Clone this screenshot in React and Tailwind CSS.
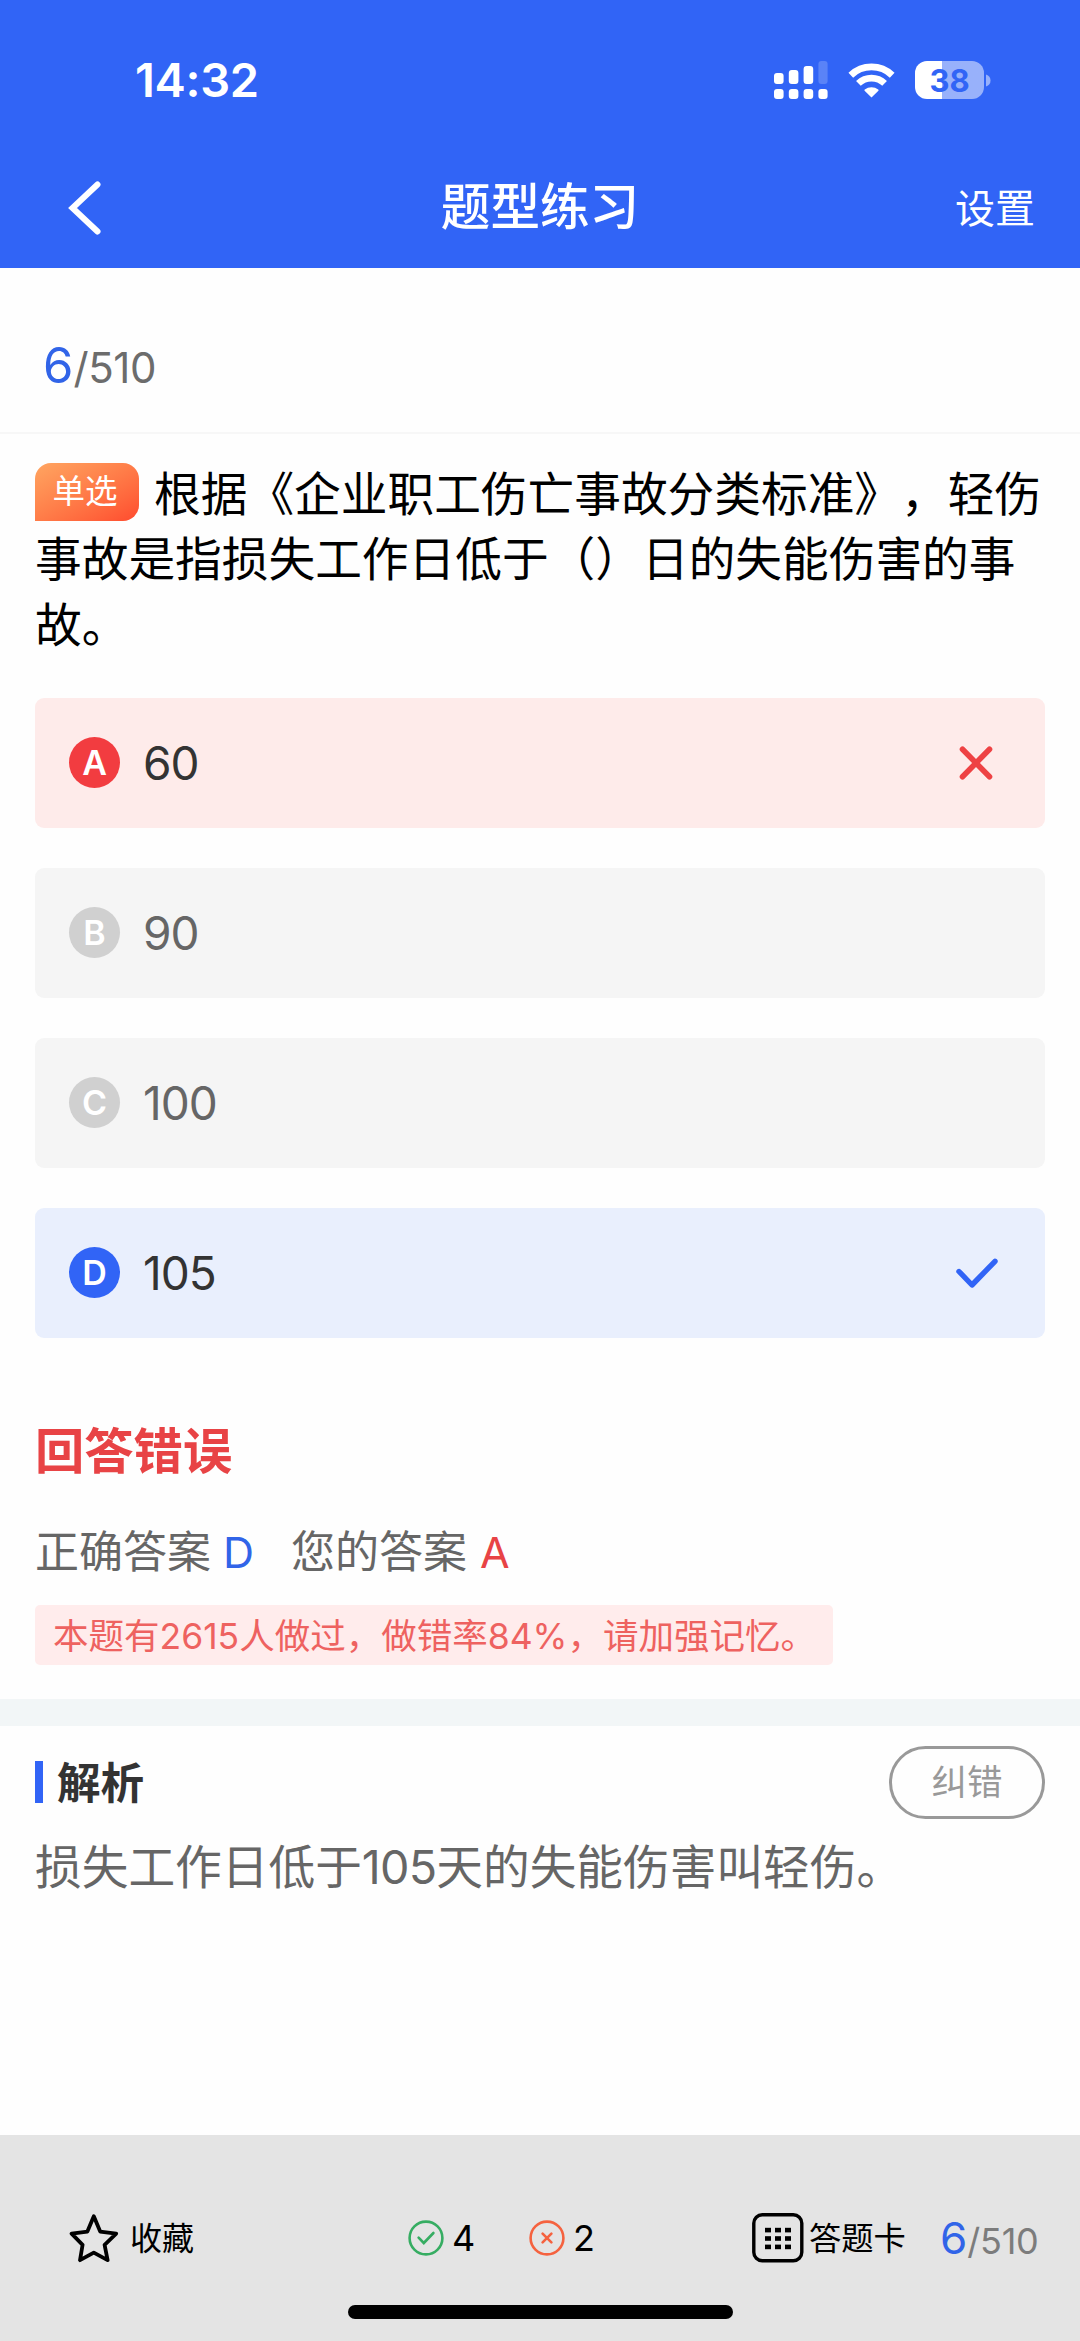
import React, { useState } from 'react';

const options = [
  { key: 'A', text: '60' },
  { key: 'B', text: '90' },
  { key: 'C', text: '100' },
  { key: 'D', text: '105' },
];

const StatusBar = () => (
  <div className="flex h-[134px] items-start justify-between pl-[135px] pr-[89px] pt-[56px] text-white">
    <span className="text-[47px] leading-[48px] font-semibold tracking-[-0.3px]">14:32</span>
    <div className="flex items-center pt-[5px]">
      {/* dual sim signal */}
      <svg className="h-[38px] w-[54px]" viewBox="0 0 54 38" fill="currentColor">
        <rect x="0" y="12" width="9.6" height="11" rx="3" />
        <rect x="14.8" y="9" width="9.6" height="14" rx="3" />
        <rect x="29.6" y="5" width="9.6" height="18" rx="3" />
        <rect x="44.4" y="0" width="9.2" height="23" rx="3" opacity="0.2" />
        <rect x="0" y="28" width="9.6" height="10" rx="3" />
        <rect x="14.8" y="28" width="9.6" height="10" rx="3" />
        <rect x="29.6" y="28" width="9.6" height="10" rx="3" />
        <rect x="44.4" y="28" width="9.2" height="10" rx="3" />
      </svg>
      <svg className="ml-[20px] h-[35px] w-[47px]" viewBox="0 0 47 35">
        <g fill="none" stroke="currentColor" strokeWidth="6.8">
          <path d="M2.8 12.2a30 30 0 0 1 41.4 0" />
          <path d="M10.4 20.4a19 19 0 0 1 26.2 0" />
        </g>
        <path d="M23.5 34.5l-6.9-6.7q-.6-.7.2-1.2a10.4 10.4 0 0 1 13.4 0q.8.5.2 1.2z" fill="currentColor" />
      </svg>
      <div className="ml-[20px] flex h-[38px] w-[69px] items-center justify-center rounded-[12px] bg-linear-to-r from-white from-39% to-[#98b1fb] to-39% text-[31px] leading-none font-bold text-[#3164f6]">
        38
      </div>
      <svg className="ml-[2px] h-[13px] w-[5px]" viewBox="0 0 5 13">
        <path d="M0 0.5Q4.5 2 4.5 6.5T0 12.5z" fill="#98b1fb" />
      </svg>
    </div>
  </div>
);

const Progress = ({ small }) => (
  <div className={small ? 'flex items-baseline text-[36px] leading-none text-[#7c7c7c]' : 'flex items-baseline text-[42px] leading-none text-[#6c6c6c]'}>
    <span className={small ? 'text-[44px] text-[#3164e8]' : 'text-[49px] text-[#3164e8]'}>6</span>
    <span className={small ? 'tracking-[-0.2px]' : 'tracking-[-0.4px]'}>/510</span>
  </div>
);

const Option = ({ option, answer, selected, onSelect }) => {
  const isRight = option.key === answer;
  const isWrong = option.key === selected && !isRight;

  let card = 'bg-[#f5f5f5] text-[#666]';
  let dot = 'bg-[#d0d0d0]';
  if (isWrong) {
    card = 'bg-[#feebea] text-[#333]';
    dot = 'bg-[#f23c40]';
  }
  if (isRight) {
    card = 'bg-[#e9effd] text-[#333]';
    dot = 'bg-[#3164f6]';
  }

  return (
    <div
      onClick={() => onSelect(option.key)}
      className={`flex h-[130px] cursor-pointer items-center rounded-[9px] pl-[34px] pr-[46px] ${card}`}
    >
      <span className={`flex size-[51px] items-center justify-center rounded-full text-[34px] leading-none font-semibold text-white ${dot}`}>
        {option.key}
      </span>
      <span className="ml-[23px] flex-1 text-[46px] leading-none tracking-[-1px]">{option.text}</span>
      {isWrong && (
        <svg className="mr-[6px] size-[34px]" viewBox="0 0 34 34" fill="none" stroke="#ee4244" strokeWidth="5.6" strokeLinecap="round">
          <path d="M3.5 3.2L30.5 30.8M30.5 3.2L3.5 30.8" />
        </svg>
      )}
      {isRight && (
        <svg className="h-[32px] w-[44px]" viewBox="0 0 44 32" fill="none" stroke="#3164f6" strokeWidth="5.4" strokeLinecap="round" strokeLinejoin="round">
          <path d="M4 14.5L17 28L40 4.3" />
        </svg>
      )}
    </div>
  );
};

const App = () => {
  const [selected, setSelected] = useState('A');
  const answer = 'D';

  return (
    <div
      lang="zh-CN"
      className="flex h-[2341px] w-[1080px] flex-col overflow-hidden bg-[#fefefe] font-['Inter','Noto_Sans_CJK_SC',sans-serif] text-black [text-spacing-trim:space-all]"
    >
      {/* Header */}
      <header className="h-[268px] bg-[#3164f6]">
        <StatusBar />
        <div className="grid h-[134px] grid-cols-3 items-center px-[45px] pt-[13px] text-white">
          <svg className="ml-[23px] h-[54px] w-[34px]" viewBox="0 0 34 54" fill="none" stroke="currentColor" strokeWidth="6" strokeLinecap="round">
            <path d="M29.5 3.5L4.5 27L29.5 50.5" />
          </svg>
          <h1 className="text-center text-[49.6px] leading-none font-medium">题型练习</h1>
          <button className="pt-[2px] text-right text-[40px] leading-none">设置</button>
        </div>
      </header>

      {/* Counter */}
      <div className="flex h-[166px] items-center border-b-2 border-[#f7f7f7] pl-[43px] pt-[30px]">
        <Progress />
      </div>

      {/* Question */}
      <main className="px-[35px] pt-[28px]">
        <p className="text-[46.7px] leading-[65.3px]">
          <span className="float-left mt-[1px] mr-[15px] flex h-[58px] w-[104px] items-center justify-center rounded-[16px] rounded-bl-none bg-linear-to-br from-[#ffa561] to-[#ff4a2e] pr-[4px] pt-[1px] text-[32.5px] leading-none text-white">
            单选
          </span>
          根据《企业职工伤亡事故分类标准》，轻伤事故是指损失工作日低于（）日的失能伤害的事故。
        </p>

        <div className="mt-[40px] flex flex-col gap-[40px]">
          {options.map((option) => (
            <Option key={option.key} option={option} answer={answer} selected={selected} onSelect={setSelected} />
          ))}
        </div>

        {/* Result */}
        <h2 className="mt-[88px] text-[49.3px] leading-[50px] font-bold text-[#e84345]">回答错误</h2>
        <div className="mt-[51px] flex items-center text-[44px] leading-[50px] text-[#666]">
          <span>正确答案</span>
          <span className="ml-[12px] text-[43px] text-[#3164e8]">D</span>
          <span className="ml-[37px]">您的答案</span>
          <span className="ml-[13px] text-[43px] text-[#e84345]">A</span>
        </div>
        <div className="mt-[28px] flex h-[60px] w-[798px] items-center rounded-[5px] bg-[#ffecec] pl-[18px] pt-[3px] text-[35.5px] leading-none text-[#ee6260]">
          本题有2615人做过，做错率84%，请加强记忆。
        </div>
      </main>

      <div className="mt-[34px] h-[27px] shrink-0 bg-[#f2f6f7]" />

      {/* Analysis */}
      <section className="px-[35px] pt-[20px]">
        <div className="flex h-[73px] items-center">
          <span className="h-[42px] w-[8px] bg-[#3164f6]" />
          <h3 className="ml-[14px] flex-1 pt-[2px] text-[43.6px] leading-none font-bold text-[#333]">解析</h3>
          <button className="h-[73px] w-[156px] rounded-full border-[3px] border-[#999] pt-[1px] text-[35.5px] leading-none text-[#999]">
            纠错
          </button>
        </div>
        <p className="mt-[16px] text-[46.7px] leading-[65px] text-[#666]">
          损失工作日低于<span className="tracking-[-0.8px]">105</span>天的失能伤害叫轻伤。
        </p>
      </section>

      {/* Bottom bar */}
      <footer className="mt-auto h-[206px] bg-[#e4e4e4]">
        <div className="flex h-[170px] items-center pl-[69px] pt-[36px] text-[32px] leading-none">
          <svg className="h-[50px] w-[50px]" viewBox="0 0 50 50" fill="none" stroke="#000" strokeWidth="3.8" strokeLinejoin="round">
            <path d="M24.8 3.2L31.2 18.6L47.2 20.6L35.6 31.8L38.6 47.2L24.8 39.6L11 47.2L13.6 31.8L2.6 20.6L18.4 18.6Z" />
          </svg>
          <span className="ml-[11px] pt-[2px]">收藏</span>

          <svg className="ml-[214px] size-[36px]" viewBox="0 0 36 36" fill="none" stroke="#36ad62" strokeWidth="2.6">
            <circle cx="18" cy="18" r="16.4" />
            <path d="M10.6 17.6L15.8 23L25.4 13" strokeLinecap="round" />
          </svg>
          <span className="ml-[8px] w-[24px] text-[36px]">4</span>

          <svg className="ml-[53px] size-[36px]" viewBox="0 0 36 36" fill="none" stroke="#f5623f" strokeWidth="2.6">
            <circle cx="18" cy="18" r="16.4" />
            <path d="M13.6 13.6L22.4 22.4M22.4 13.6L13.6 22.4" strokeLinecap="round" />
          </svg>
          <span className="ml-[8px] w-[24px] text-[36px]">2</span>

          <svg className="ml-[155px] h-[50px] w-[52px]" viewBox="0 0 52 50">
            <rect x="1.8" y="1.8" width="48" height="46" rx="8.5" fill="none" stroke="#000" strokeWidth="3.4" />
            <g fill="#000">
              <rect x="13" y="14.8" width="6" height="4.6" />
              <rect x="23" y="14.8" width="6" height="4.6" />
              <rect x="33" y="14.8" width="6" height="4.6" />
              <rect x="13" y="23.2" width="6" height="4.6" />
              <rect x="23" y="23.2" width="6" height="4.6" />
              <rect x="33" y="23.2" width="6" height="4.6" />
              <rect x="13" y="31.6" width="6" height="4.6" />
              <rect x="23" y="31.6" width="6" height="4.6" />
              <rect x="33" y="31.6" width="6" height="4.6" />
            </g>
          </svg>
          <span className="ml-[5px] mr-[34px] pt-[2px] text-[32.3px]">答题卡</span>
          <Progress small />
        </div>
        <div className="mx-auto h-[14px] w-[385px] rounded-full bg-black" />
      </footer>
    </div>
  );
};

export default App;
